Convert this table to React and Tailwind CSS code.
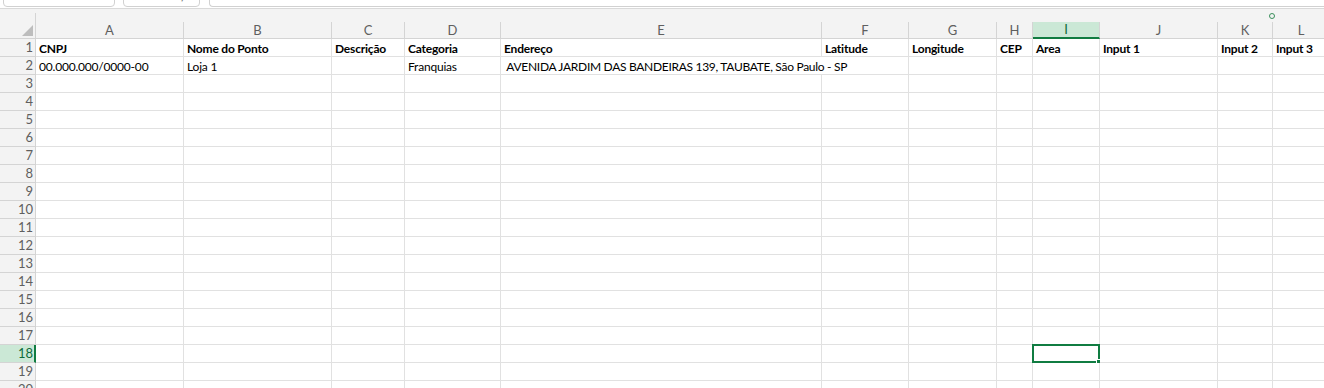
import { X, Check, ChevronDown } from "lucide-react";

const columns = ["A", "B", "C", "D", "E", "F", "G", "H", "I", "J", "K", "L"];

const rows = {
    1: ["CNPJ", "Nome do Ponto", "Descrição", "Categoria", "Endereço", "Latitude", "Longitude", "CEP", "Area", "Input 1", "Input 2", "Input 3"],
    2: ["00.000.000/0000-00", "Loja 1", "", "Franquias", " AVENIDA JARDIM DAS BANDEIRAS 139, TAUBATE, São Paulo - SP", "", "", "", "", "", "", ""],
};

const activeCol = "I";
const activeRow = 18;

export default function App() {
    const rowNumbers = Array.from({ length: 20 }, (_, i) => i + 1);

    return (
        <div className="w-[1324px] h-[388px] overflow-hidden bg-white font-['Lato',sans-serif] text-black">
            {/* formula bar, scrolled so only its lower edge shows */}
            <div className="h-[9px] overflow-hidden bg-white border-b border-[#d9d9d9] flex items-end">
                <div className="flex items-end mb-[1px] w-full">
                    <div className="ml-[3px] w-[112px] h-[22px] border border-[#d1d1d1] rounded-[4px] flex items-center justify-between pl-[4px] pr-[3px] text-[13px] text-[#333]">
                        <span>I18</span>
                        <ChevronDown size={12} strokeWidth={2} className="text-[#555]" />
                    </div>
                    <div className="ml-[8px] w-[77px] h-[22px] border border-[#d1d1d1] rounded-[4px] flex items-center gap-[9px] pl-[9px] text-[#b5b5b5]">
                        <X size={13} strokeWidth={1.5} />
                        <Check size={13} strokeWidth={1.5} />
                        <span className="ml-[4px] italic text-[13px] text-[#777]">fx</span>
                    </div>
                    <div className="ml-[9px] flex-1 h-[22px] border border-[#d1d1d1] border-r-0 rounded-l-[4px]" />
                </div>
            </div>

            {/* strip above the column headers */}
            <div className="h-[13px] bg-[#f3f3f3] flex">
                <div className="w-[36px] mt-[4px] border-r border-[#d4d4d4]" />
                <div className="ml-[1233px] mt-[4px] w-[6px] h-[6px] rounded-full border border-[#3a8f5c]" />
            </div>

            <div className="grid grid-cols-[36px_148px_148px_73px_96px_321px_87px_88px_36px_67px_118px_55px_57px]">
                {/* column headers */}
                <div className="h-[17px] bg-[#f3f3f3] border-r border-b border-[#d4d4d4] flex items-end justify-end">
                    <div className="w-0 h-0 mr-[2px] mb-[2px] border-l-[11px] border-l-transparent border-b-[11px] border-b-[#bdbdbd]" />
                </div>
                {columns.map((c) => (
                    <div
                        key={c}
                        className={
                            c === activeCol
                                ? "h-[17px] bg-[#cbe8d6] border-r border-[#d4d4d4] border-b-2 border-b-[#107c41] flex items-center justify-center text-[13px] leading-none text-[#0f6b3a]"
                                : "h-[17px] bg-[#f3f3f3] border-r border-b border-[#d4d4d4] flex items-center justify-center text-[13px] leading-none text-[#5f5f5f]"
                        }
                    >
                        {c}
                    </div>
                ))}

                {rowNumbers.map((r) => (
                    <Row key={r} r={r} />
                ))}
            </div>
        </div>
    );
}

function Row({ r }) {
    const values = rows[r] || [];
    const selected = r === activeRow;

    return (
        <>
            <div
                className={
                    selected
                        ? "h-[18px] bg-[#cbe8d6] border-r-2 border-r-[#107c41] border-b border-b-[#d4d4d4] flex items-center justify-end pr-[1px] text-[13px] leading-none text-[#0f6b3a]"
                        : "h-[18px] bg-[#f3f3f3] border-r border-b border-[#d4d4d4] flex items-center justify-end pr-[2px] text-[13px] leading-none text-[#5f5f5f]"
                }
            >
                {r}
            </div>
            {columns.map((c, i) => {
                const v = values[i] || "";
                // the address spills over into the empty F cell, so E2 drops its right gridline
                const spills = r === 2 && c === "E";
                return (
                    <div
                        key={c}
                        className={
                            spills
                                ? "relative z-10 h-[18px] border-b border-[#e1e1e1] pl-[3px] pt-[2px] text-[12px] leading-[15px] tracking-[-0.3px] whitespace-pre overflow-visible"
                                : "relative h-[18px] border-r border-b border-[#e1e1e1] pl-[3px] pt-[2px] text-[12px] leading-[15px] tracking-[-0.2px] whitespace-pre"
                        }
                    >
                        <span className={r === 1 ? "font-bold" : ""}>{v}</span>
                        {selected && c === activeCol && (
                            <div className="absolute -left-[1px] -top-[1px] w-[68px] h-[19px] border-2 border-[#107c41]">
                                <div className="absolute -right-[3px] -bottom-[3px] w-[5px] h-[5px] bg-[#107c41] border border-white" />
                            </div>
                        )}
                    </div>
                );
            })}
        </>
    );
}
